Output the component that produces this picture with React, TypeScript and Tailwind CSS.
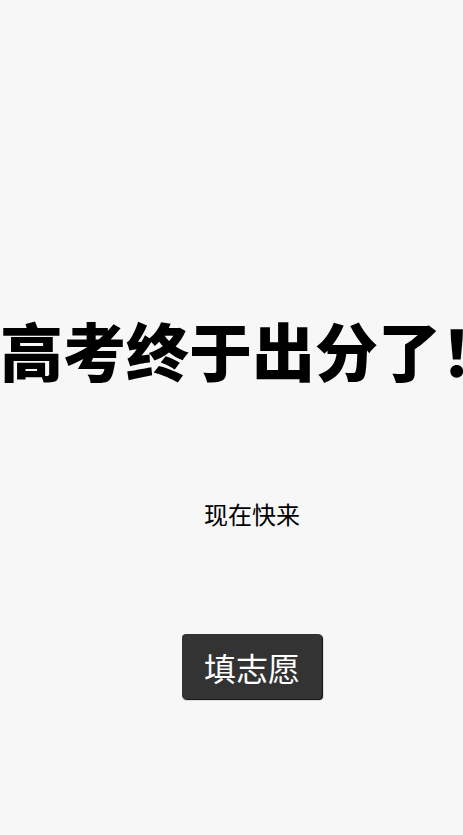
import React from "react";

export default function App() {
  return (
    <div className="min-h-[835px] w-full bg-[#f7f7f7] overflow-hidden">
      <div
        className="w-max flex flex-col items-center"
        style={{ fontFamily: '"Noto Sans CJK SC", "Noto Sans", sans-serif' }}
      >
        <h1 className="mt-[317px] text-center whitespace-nowrap text-[63px] leading-none font-black text-black">
          高考终于出分了！
        </h1>
        <p className="mt-[122px] text-[24px] leading-none text-black">现在快来</p>
        <button className="mt-[108px] w-[140px] h-[65px] rounded-[4px] bg-[#333333] text-white text-[32px] leading-none shadow-[1px_1px_1px_#000]">
          填志愿
        </button>
      </div>
    </div>
  );
}
